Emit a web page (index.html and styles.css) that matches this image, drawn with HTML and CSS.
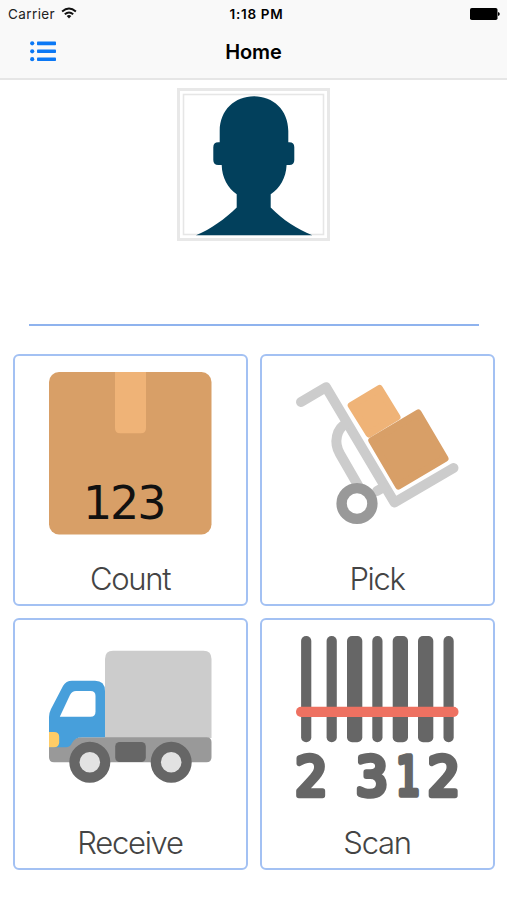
FILE: index.html
```html
<!DOCTYPE html>
<html lang="en">
<head>
<meta charset="utf-8">
<title>Home</title>
<link rel="stylesheet" href="styles.css">
</head>
<body>
<header class="top">
  <div class="status">
    <div class="carrier"><span>Carrier</span>
      <svg class="wifi" viewBox="0 0 16 12" width="16" height="12"><g fill="none" stroke="#111" stroke-width="1.9"><path d="M1.1 4.5Q8 -1.5 14.9 4.5"/><path d="M3.8 7.2Q8 3.6 12.2 7.2"/></g><path d="M5.7 9Q8 7.2 10.3 9L8 11.4Z" fill="#111"/></svg>
    </div>
    <div class="time">1:18 PM</div>
    <svg class="battery" viewBox="0 0 30 12" width="30" height="12"><rect width="27.5" height="12" rx="1.8"/><path d="M28 4Q29.8 4.3 29.8 6T28 8Z"/></svg>
  </div>
  <nav class="bar">
    <svg class="menu" viewBox="0 0 26 21" width="26" height="21" fill="#0b78f5"><circle cx="2.2" cy="2.3" r="2.1"/><circle cx="2.2" cy="10.3" r="2.1"/><circle cx="2.2" cy="18.2" r="2.1"/><rect x="7" y=".6" width="19" height="3.6" rx=".8"/><rect x="7" y="8.5" width="19" height="3.6" rx=".8"/><rect x="7" y="16.4" width="19" height="3.6" rx=".8"/></svg>
    <h1>Home</h1>
  </nav>
</header>
<main>
  <svg class="avatar" viewBox="0 0 153 153" width="153" height="153">
    <rect x="1.5" y="1.5" width="150" height="150" fill="#fff" stroke="#e8e8e8" stroke-width="3"/>
    <rect x="6.5" y="6.5" width="140" height="140" fill="none" stroke="#e6e6e6" stroke-width="1.6"/>
    <path fill="#02405c" d="M42.7 54.3V43C42.7 22 58 8.3 77 8.3S111.3 22 111.3 43V54.3H112.300Q117.300 54.300 117.300 59.300V72Q117.300 77 112.300 77H109.600C109 90 103 100 93.700 106.300V119.500C106 132 120 141 135.300 147.300H19C34 141 48 131 59.700 119.500V106.300C51 100 45 90 44.700 77H41.300Q36.300 77 36.300 72V59.300Q36.300 54.300 41.300 54.300Z"/>
  </svg>
  <hr>
  <section class="grid">
    <a class="card">
      <svg viewBox="0 0 163 163" width="163" height="163">
        <rect width="162.500" height="162.500" rx="10" fill="#d89f67"/>
        <path d="M66 0H97V56Q97 61.300 92 61.300H71Q66 61.300 66 56Z" fill="#efb377"/>
        <text class="box-number" x="34" y="147.300">123</text>
      </svg>
      <span>Count</span>
    </a>
    <a class="card">
      <svg viewBox="0 0 163 163" width="163" height="163">
        <g fill="none" stroke="#ccc" stroke-width="10" stroke-linecap="round" stroke-linejoin="round"><path d="M5 30L30 15.200L98.500 130.500L157.500 96"/><path d="M50 52C41 56 37 70 44 82L63 115M81 119L88 115"/></g>
        <path d="M55.200 33.500L83.500 16.500L101 45L73 62Z" fill="#efb377" stroke="#efb377" stroke-width="7" stroke-linejoin="round"/>
        <path d="M75.800 68.500L122.200 41L149 86.500L102.500 114Z" fill="#d89f67" stroke="#d89f67" stroke-width="7" stroke-linejoin="round"/>
        <circle cx="61" cy="131.500" r="15.400" fill="#fff" stroke="#999" stroke-width="10.400"/>
      </svg>
      <span>Pick</span>
    </a>
    <a class="card">
      <svg viewBox="0 0 163 163" width="163" height="163">
        <path d="M56 102V23Q56 14.700 64 14.700H154.500Q162.500 14.700 162.500 23V102Z" fill="#ccc"/>
        <path d="M0 105H20L30 101.300H157.500Q162.500 101.300 162.500 106V121.300Q162.500 126.300 157.500 126.300H5Q0 126.300 0 121.300Z" fill="#999"/>
        <path d="M0 111.300V81Q0 77 2 73L14 50Q17 44.700 23 44.700H46Q56 44.700 56 55V101.300H33Q26 101.300 23 107Q21 111.300 17 111.300Z" fill="#479fdb"/>
        <path d="M10.800 80.700L21 59Q23 55 27 55H41.500Q46.500 55 46.500 60V75.700Q46.500 80.700 41.500 80.700Z" fill="#fff"/>
        <path d="M0 96H5Q10.200 96 10.200 101V106.300Q10.200 111.300 5 111.300H0Z" fill="#fc6"/>
        <rect x="66.200" y="106" width="30.600" height="20" rx="4.500" fill="#666"/>
        <g fill="#e2e2e2" stroke="#666" stroke-width="10.200"><circle cx="40.800" cy="126.300" r="15.400"/><circle cx="122.200" cy="126.300" r="15.400"/></g>
      </svg>
      <span>Receive</span>
    </a>
    <a class="card">
      <svg viewBox="0 0 163 163" width="163" height="163">
        <g fill="#666"><rect x="5.100" width="10.200" height="106.300" rx="5"/><rect x="30.600" width="10.200" height="106.300" rx="5"/><rect x="51" width="15.300" height="106.300" rx="5"/><rect x="76.300" width="10.200" height="106.300" rx="5"/><rect x="96.700" width="15.300" height="106.300" rx="5"/><rect x="122" width="15.300" height="106.300" rx="5"/><rect x="147.500" width="10.200" height="106.300" rx="5"/></g>
        <rect y="70.800" width="162.500" height="10.200" rx="5" fill="#ee7161"/>
        <g class="code"><text x="-1" y="159.300">2</text><text x="60" y="159.300">3</text><text x="99.500" y="159.300" textLength="24" lengthAdjust="spacingAndGlyphs">1</text><text x="131.500" y="159.300">2</text></g>
      </svg>
      <span>Scan</span>
    </a>
  </section>
</main>
</body>
</html>
```
FILE: styles.css
```css
* { box-sizing: border-box; }
body {
  margin: 0;
  background: #fff;
  color: #000;
  font-family: Inter, "Liberation Sans", sans-serif;
}
.top {
  height: 80px;
  background: #f9f9f9;
  border-bottom: 2px solid #e6e6e6;
}
.status {
  display: grid;
  grid-template-columns: 1fr auto 1fr;
  align-items: center;
  height: 27px;
  padding: 0 7px 0 13px;
  font-size: 13.5px;
}
.carrier { display: flex; align-items: center; gap: 7px; margin-left: -5px; color: #222; letter-spacing: .4px; }
.wifi { margin: -2px 0 0 -1px; }
.time { font-weight: 600; font-size: 13.5px; letter-spacing: .7px; }
.battery { justify-self: end; }
.bar {
  display: grid;
  grid-template-columns: 1fr auto 1fr;
  align-items: center;
  height: 50px;
}
.menu { margin: -2px 0 0 30px; }
h1 { margin: 0; font-size: 20px; font-weight: 600; letter-spacing: -.1px; }
main { display: flex; flex-direction: column; align-items: center; padding-top: 8px; }
.avatar { display: block; }
hr {
  width: 450px;
  height: 2px;
  margin: 83px 0 27.5px;
  border: 0;
  background: #8fb3ee;
}
.grid {
  display: grid;
  grid-template-columns: 235px 235px;
  grid-auto-rows: 252px;
  gap: 12px;
}
.card {
  display: flex;
  flex-direction: column;
  align-items: center;
  padding-top: 16px;
  border: 2px solid #a3c1f3;
  border-radius: 6px;
}
.card svg { overflow: visible; }
.card span {
  margin-top: 25px;
  color: #444;
  font-size: 31px;
  font-weight: 300;
  line-height: 38px;
  letter-spacing: -1.3px;
}
.box-number {
  font: 46px "DejaVu Sans", sans-serif;
  letter-spacing: -2.2px;
  fill: #111;
}
.code {
  font: 53px "DejaVu Sans Mono", monospace;
  fill: #666;
  stroke: #666;
  stroke-width: 5.5px;
  stroke-linejoin: round;
}
```
